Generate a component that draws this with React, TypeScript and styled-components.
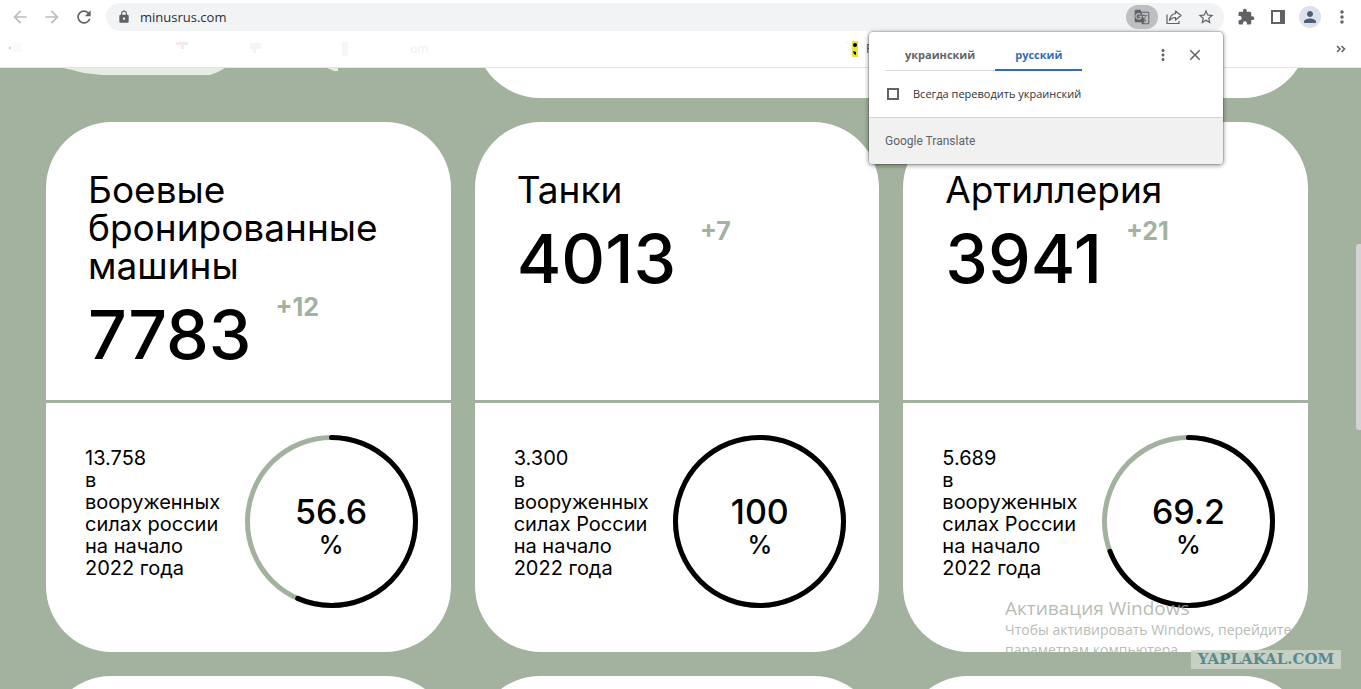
import React from 'react';
import styled, { createGlobalStyle } from 'styled-components';
import { MdArrowBack, MdArrowForward, MdRefresh, MdLock, MdGTranslate, MdStarBorder, MdExtension, MdPerson, MdMoreVert, MdClose } from 'react-icons/md';

const sage = '#a3b19f';
const uiFont = '"Open Sans", "Noto Sans", sans-serif';

const GlobalStyle = createGlobalStyle`
  * { box-sizing: border-box; }
  body { margin: 0; background: ${sage}; font-family: Inter, "Noto Sans", sans-serif; color: #000; }
  button { font: inherit; color: inherit; background: none; border: 0; padding: 0; margin: 0; cursor: pointer; }
  h2, p { margin: 0; font-weight: inherit; }
`;

const Shell = styled.div`
  position: relative;
  display: flex;
  flex-direction: column;
  height: 100vh;
  overflow: hidden;
`;

const BrowserHeader = styled.header`
  position: relative;
  flex: none;
  background: #fff;
  border-bottom: 1px solid #e3e5e2;
  font-family: ${uiFont};
`;

const Toolbar = styled.div`
  display: flex;
  align-items: center;
  height: 34px;
  padding: 0 8px 0 9px;
  gap: 10px;
`;

const IconButton = styled.button<{ $tone?: string; $size?: number }>`
  display: flex;
  align-items: center;
  justify-content: center;
  flex: none;
  width: ${({ $size = 22 }) => $size}px;
  height: ${({ $size = 22 }) => $size}px;
  color: ${({ $tone = '#5f6368' }) => $tone};
`;

const AddressBar = styled.form`
  display: flex;
  align-items: center;
  flex: 1;
  height: 28px;
  margin: 0 1px;
  padding: 0 7px 0 11px;
  border-radius: 14px;
  background: #f1f3f4;
  color: #5f6368;
`;

const AddressInput = styled.input`
  flex: 1;
  min-width: 0;
  margin-left: 9px;
  padding: 0;
  border: 0;
  outline: 0;
  background: none;
  font: 13px/20px ${uiFont};
  color: #2c2e31;
`;

const AddressActions = styled.div`
  display: flex;
  align-items: center;
  gap: 10px;
`;

const TranslateButton = styled.button`
  display: flex;
  align-items: center;
  justify-content: center;
  width: 32px;
  height: 24px;
  margin-right: -5px;
  border-radius: 12px;
  background: #bdbfc0;
  color: #5f6368;
`;

const Avatar = styled(IconButton)`
  border-radius: 50%;
  background: #dce1ea;
`;

const BookmarksBar = styled.nav`
  display: flex;
  align-items: center;
  justify-content: space-between;
  height: 33px;
  padding: 0 14px 3px 8px;
  font-size: 12px;
  line-height: 16px;
  color: #5f6368;
`;

const BookmarkList = styled.div`
  display: flex;
  align-items: center;
`;

const Bookmark = styled.a`
  display: flex;
  align-items: center;
  gap: 8px;
  color: #55585c;
  text-decoration: none;
`;

const Smear = styled.svg`
  position: absolute;
  left: 60px;
  top: 67px;
  z-index: 1;
`;

const Page = styled.main`
  flex: 1;
  min-height: 0;
  overflow: hidden;
  padding: 0 53px 0 46px;
`;

const CardGrid = styled.div`
  display: grid;
  grid-template-columns: repeat(3, 1fr);
  gap: 24px;
  margin-top: -100px;
`;

const Card = styled.article`
  display: flex;
  flex-direction: column;
  min-width: 0;
  min-height: 130px;
  border-radius: 66px;
  background: #fff;
`;

const WideCard = styled(Card)`
  grid-column: 2 / 4;
`;

const CardTop = styled.div`
  min-height: 281px;
  padding: 49px 42px 24px;
  border-bottom: 3px solid ${sage};
`;

const Title = styled.h2`
  font-size: 37px;
  line-height: 38px;
`;

const Total = styled.div`
  display: flex;
  align-items: flex-start;
  gap: 24px;
  margin-top: 12px;
`;

const TotalValue = styled.span`
  font-size: 68px;
  font-weight: 500;
  line-height: 74px;
`;

const Delta = styled.span`
  font-size: 25px;
  font-weight: 700;
  line-height: 20px;
  color: ${sage};
`;

const CardBottom = styled.div`
  display: flex;
  align-items: flex-start;
  justify-content: space-between;
  padding: 32px 33px 44px 39px;
`;

const Note = styled.p`
  width: 148px;
  padding-top: 12px;
  font-size: 20px;
  line-height: 22px;
`;

const Gauge = styled.div`
  display: grid;
  flex: none;
  width: 173px;
  height: 173px;
  > * { grid-area: 1 / 1; }
`;

const GaugeLabel = styled.div`
  display: flex;
  flex-direction: column;
  align-items: center;
  justify-content: center;
  padding-top: 8px;
  font-weight: 500;
`;

const Percent = styled.span`
  font-size: 34px;
  line-height: 38px;
`;

const PercentSign = styled.span`
  font-size: 25px;
  line-height: 28px;
`;

const Popup = styled.section`
  position: absolute;
  top: 32px;
  right: 138px;
  z-index: 3;
  width: 354px;
  overflow: hidden;
  border-radius: 4px;
  background: #fff;
  box-shadow: 0 0 0 1px rgba(0, 0, 0, 0.14), 0 1px 4px 1px rgba(0, 0, 0, 0.35);
  font-family: ${uiFont};
  font-size: 11px;
  line-height: 16px;
`;

const PopupHead = styled.div`
  display: flex;
  align-items: flex-start;
  padding: 0 17px 0 16px;
`;

const Tabs = styled.div`
  display: flex;
  margin-right: auto;
`;

const Tab = styled.button<{ $active?: boolean }>`
  height: 39px;
  padding: 8px 20px 0;
  border-bottom: ${({ $active }) => ($active ? '2px solid #2f6db8' : '1px solid #dadce0')};
  font-weight: 700;
  color: ${({ $active }) => ($active ? '#2f6db8' : '#5f6368')};
`;

const PopupActions = styled.div`
  display: flex;
  gap: 10px;
  padding-top: 12px;
`;

const Always = styled.label`
  display: flex;
  align-items: center;
  gap: 14px;
  padding: 15px 18px;
  color: #303236;
`;

const Tick = styled.input`
  appearance: none;
  width: 12px;
  height: 12px;
  margin: 0;
  border: 2px solid #5f6368;
`;

const PopupFoot = styled.footer`
  padding: 15px 16px;
  border-top: 1px solid #d5d6d8;
  background: #f1f1f1;
  font-family: Roboto, sans-serif;
  font-size: 12px;
  color: #5f6368;
`;

const ScrollThumb = styled.div`
  position: absolute;
  top: 244px;
  right: 0;
  width: 5px;
  height: 186px;
  border-radius: 3px 0 0 3px;
  background: #d2d3d2;
`;

const ActivationNotice = styled.aside`
  position: absolute;
  right: 66px;
  top: 596px;
  width: 290px;
  height: 56px;
  overflow: hidden;
  font-family: ${uiFont};
  font-size: 14px;
  line-height: 20px;
  white-space: nowrap;
  color: rgba(163, 170, 160, 0.8);
  pointer-events: none;
`;

const NoticeTitle = styled.p`
  font-size: 19px;
  line-height: 24px;
`;

const SiteMark = styled.div`
  position: absolute;
  right: 20px;
  top: 650px;
  width: 150px;
  background: rgba(204, 214, 203, 0.85);
  font: 700 15px/19px "DejaVu Serif", serif;
  text-align: center;
  color: #5b898d;
`;

type Stat = { title: string; total: string; delta: string; stock: string; note: string; percent: number };

const stats: Stat[] = [
  { title: 'Боевые бронированные машины', total: '7783', delta: '+12', stock: '13.758', note: 'в вооруженных силах россии на начало 2022 года', percent: 56.6 },
  { title: 'Танки', total: '4013', delta: '+7', stock: '3.300', note: 'в вооруженных силах России на начало 2022 года', percent: 100 },
  { title: 'Артиллерия', total: '3941', delta: '+21', stock: '5.689', note: 'в вооруженных силах России на начало 2022 года', percent: 69.2 },
];

function Ring({ percent }: { percent: number }) {
  return (
    <svg viewBox="0 0 173 173" fill="none" strokeWidth="5" aria-hidden="true">
      <circle cx="86.5" cy="86.5" r="84" stroke={sage} />
      <circle cx="86.5" cy="86.5" r="84" stroke="#000" strokeLinecap="round" pathLength="100"
        strokeDasharray={`${percent} 100`} transform="rotate(-90 86.5 86.5)" />
    </svg>
  );
}

function StatCard({ stat }: { stat: Stat }) {
  return (
    <Card>
      <CardTop>
        <Title>{stat.title}</Title>
        <Total>
          <TotalValue>{stat.total}</TotalValue>
          <Delta>{stat.delta}</Delta>
        </Total>
      </CardTop>
      <CardBottom>
        <Note>
          {stat.stock}
          <br />
          {stat.note}
        </Note>
        <Gauge>
          <Ring percent={stat.percent} />
          <GaugeLabel>
            <Percent>{stat.percent}</Percent>
            <PercentSign>%</PercentSign>
          </GaugeLabel>
        </Gauge>
      </CardBottom>
    </Card>
  );
}

export default function App() {
  return (
    <Shell>
      <GlobalStyle />
      <BrowserHeader>
        <Toolbar>
          <IconButton aria-label="Назад" $tone="#bbbdbf"><MdArrowBack size={20} /></IconButton>
          <IconButton aria-label="Вперёд" $tone="#bbbdbf"><MdArrowForward size={20} /></IconButton>
          <IconButton aria-label="Обновить"><MdRefresh size={20} /></IconButton>
          <AddressBar>
            <MdLock size={14} />
            <AddressInput aria-label="Адрес" defaultValue="minusrus.com" />
            <AddressActions>
              <TranslateButton type="button" aria-label="Перевести"><MdGTranslate size={16} /></TranslateButton>
              <IconButton type="button" aria-label="Поделиться">
                <svg width="18" height="18" viewBox="0 0 18 18" fill="none" stroke="currentColor" strokeWidth="1.2">
                  <path d="M2 6.500V15.500H14V13" />
                  <path d="M10.500 3L16 7.500L10.500 12V9.500C7.500 9.500 6 10.500 4.500 12.500C5 8.500 7 6 10.500 5.500Z" strokeLinejoin="round" />
                </svg>
              </IconButton>
              <IconButton type="button" aria-label="В закладки"><MdStarBorder size={18} /></IconButton>
            </AddressActions>
          </AddressBar>
          <IconButton aria-label="Расширения"><MdExtension size={18} /></IconButton>
          <IconButton aria-label="Боковая панель">
            <svg width="14" height="14" viewBox="0 0 14 14" fill="currentColor">
              <path fillRule="evenodd" d="M0 0H14V14H0ZM2 2V12H9V2Z" />
            </svg>
          </IconButton>
          <Avatar aria-label="Профиль" $tone="#4c5d75"><MdPerson size={18} /></Avatar>
          <IconButton aria-label="Меню"><MdMoreVert size={20} /></IconButton>
        </Toolbar>
        <BookmarksBar>
          <BookmarkList>
            <svg width="838" height="24" viewBox="0 0 838 24" aria-hidden="true">
              <path d="M0 11L3 9V13Z" fill="#d4d4d4" />
              <rect x="5" y="6" width="8" height="9" fill="#fafafa" />
              <path d="M168 5H180V8H176V12H173V8H168Z" fill="#fae8e8" />
              <path d="M242 6H253V12H248V16H245V12H242Z" fill="#f8f4f4" />
              <rect x="334" y="5" width="6" height="14" fill="#f6f6f6" />
              <text x="402" y="16" fontSize="12" fill="#efefef">om</text>
            </svg>
            <Bookmark href="#">
              <svg width="12" height="16" viewBox="0 0 12 16" aria-hidden="true">
                <path d="M6 0H12V16H6Z" fill="#e9e436" />
                <path d="M0 1L5 4L6 8" stroke="#eeeedd" fill="none" />
                <ellipse cx="9" cy="4" rx="2" ry="2" />
                <path d="M7 10L10 11V14L8 13Z" />
              </svg>
              F
            </Bookmark>
          </BookmarkList>
          <IconButton aria-label="Другие закладки" $size={12}>
            <svg width="10" height="8" viewBox="0 0 10 8" fill="none" stroke="currentColor" strokeWidth="1.6">
              <path d="M1 1L4 4L1 7M5.500 1L8.500 4L5.500 7" />
            </svg>
          </IconButton>
        </BookmarksBar>
        <Smear width="290" height="8" viewBox="0 0 290 8" fill="#e7ebe6" aria-hidden="true">
          <path d="M3 1H165L158 5L150 8H42L24 6L12 3Z" />
          <path d="M267 1H278V4H274Z" />
        </Smear>
      </BrowserHeader>

      <Page>
        <CardGrid>
          <WideCard />
          {stats.map((stat) => <StatCard key={stat.title} stat={stat} />)}
          <Card />
          <Card />
          <Card />
        </CardGrid>
      </Page>

      <ScrollThumb />

      <Popup aria-label="Google Translate">
        <PopupHead>
          <Tabs role="tablist">
            <Tab role="tab" aria-selected="false">украинский</Tab>
            <Tab role="tab" aria-selected="true" $active>русский</Tab>
          </Tabs>
          <PopupActions>
            <IconButton aria-label="Параметры"><MdMoreVert size={18} /></IconButton>
            <IconButton aria-label="Закрыть"><MdClose size={18} /></IconButton>
          </PopupActions>
        </PopupHead>
        <Always>
          <Tick type="checkbox" />
          Всегда переводить украинский
        </Always>
        <PopupFoot>Google Translate</PopupFoot>
      </Popup>

      <ActivationNotice>
        <NoticeTitle>Активация Windows</NoticeTitle>
        <p>Чтобы активировать Windows, перейдите</p>
        <p>параметрам компьютера.</p>
      </ActivationNotice>
      <SiteMark>YAPLAKAL.COM</SiteMark>
    </Shell>
  );
}
